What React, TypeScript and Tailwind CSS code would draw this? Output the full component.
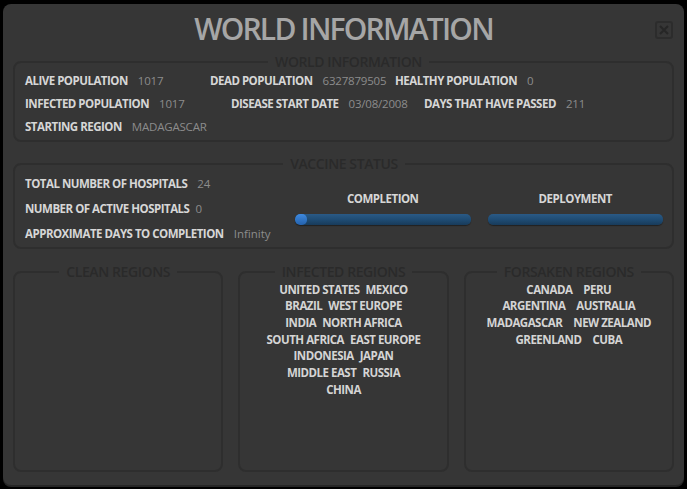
import React from "react";

const F = { fontFamily: '"Open Sans", "Noto Sans", sans-serif' };

function Legend({ children }: { children: React.ReactNode }) {
  return (
    <legend className="mx-auto px-[7px] text-[14px] leading-[16px] text-[#2a2a2a] font-semibold tracking-[-0.4px]">
      {children}
    </legend>
  );
}

function Pair({ label, value, w }: { label: string; value: string; w?: string }) {
  return (
    <div className={`flex items-center shrink-0 ${w ?? ""}`}>
      <span className="font-bold text-[#d6d6d6] tracking-[-0.5px]">{label}</span>
      <span className="ml-[10px] text-[#8c8c8c] tracking-[-0.2px]">{value}</span>
    </div>
  );
}

function Bar({ fill }: { fill: number }) {
  return (
    <div className="h-[11px] w-full rounded-[5px] bg-gradient-to-b from-[#2a5a86] via-[#1f4c74] to-[#183b5a] overflow-hidden shadow-[0_1px_1px_rgba(0,0,0,0.4)]">
      <div
        className="h-full rounded-[5px] bg-gradient-to-b from-[#3f8ae0] to-[#2462ad]"
        style={{ width: fill }}
      />
    </div>
  );
}

function RegionBox({
  title,
  lines,
  gap,
}: {
  title: string;
  lines: string[][];
  gap: string;
}) {
  return (
    <fieldset className="flex-1 h-[208px] border-2 border-[#2e2e2e] rounded-[8px] px-2 min-w-0">
      <Legend>{title}</Legend>
      <div className="flex flex-col items-center mt-[1px]">
        {lines.map((l, i) => (
          <div key={i} className={`flex ${gap} h-[16.7px] items-center text-[11.5px] font-bold text-[#d4d4d4] tracking-[-0.5px] whitespace-nowrap`}>
            {l.map((w) => (
              <span key={w}>{w}</span>
            ))}
          </div>
        ))}
      </div>
    </fieldset>
  );
}

export default function App() {
  return (
    <div className="w-[687px] h-[489px] bg-black pt-[4px] pl-[3px]" style={F}>
      <div className="w-[681px] h-[481px] bg-[#363636] rounded-[8px] shadow-[0_2px_0_#262626] flex flex-col px-[10px]">
        <div className="relative h-[46px] flex items-center justify-center">
          <h1 className="text-[30px] leading-[34px] mt-[3px] font-semibold text-[#a6a6a6] tracking-[-1.8px]">WORLD INFORMATION</h1>
          <div className="absolute right-[1px] top-[17px] w-[18px] h-[18px] border-2 border-[#2c2c2c] rounded-[3px] flex items-center justify-center">
            <svg width="12" height="12" viewBox="0 0 12 12">
              <path d="M2 2 L10 10 M10 2 L2 10" stroke="#262626" strokeWidth="2" />
            </svg>
          </div>
        </div>

        <fieldset className="h-[88px] border-2 border-[#2e2e2e] rounded-[8px] pl-[10px] text-[11.5px] mt-[4px]">
          <Legend>WORLD INFORMATION</Legend>
          <div className="flex flex-col mt-[-1px]">
            <div className="flex h-[23px] items-center">
              <Pair label="ALIVE POPULATION" value="1017" w="w-[185px]" />
              <Pair label="DEAD POPULATION" value="6327879505" w="w-[185px]" />
              <Pair label="HEALTHY POPULATION" value="0" />
            </div>
            <div className="flex h-[23px] items-center">
              <Pair label="INFECTED POPULATION" value="1017" w="w-[206px]" />
              <Pair label="DISEASE START DATE" value="03/08/2008" w="w-[193px]" />
              <Pair label="DAYS THAT HAVE PASSED" value="211" />
            </div>
            <div className="flex h-[23px] items-center">
              <Pair label="STARTING REGION" value="MADAGASCAR" />
            </div>
          </div>
        </fieldset>

        <fieldset className="h-[93px] border-2 border-[#2e2e2e] rounded-[8px] pl-[10px] pr-[9px] text-[11.5px] mt-[14px] flex">
          <Legend>VACCINE STATUS</Legend>
          <div className="flex w-full">
            <div className="flex flex-col w-[270px] mt-[-1px]">
              <div className="flex h-[25px] items-center">
                <span className="font-bold text-[#d6d6d6] tracking-[-0.5px]">TOTAL NUMBER OF HOSPITALS</span>
                <span className="ml-[10px] text-[#8c8c8c]">24</span>
              </div>
              <div className="flex h-[25px] items-center">
                <span className="font-bold text-[#d6d6d6] tracking-[-0.5px]">NUMBER OF ACTIVE HOSPITALS</span>
                <span className="ml-[6px] text-[#8c8c8c]">0</span>
              </div>
              <div className="flex h-[26px] items-center">
                <span className="font-bold text-[#d6d6d6] tracking-[-0.5px]">APPROXIMATE DAYS TO COMPLETION</span>
                <span className="ml-[10px] text-[#8c8c8c]">Infinity</span>
              </div>
            </div>
            <div className="flex-1 flex gap-[17px] pl-[0px] mt-[19px]">
              <div className="flex-1 flex flex-col items-center">
                <span className="font-bold text-[#d6d6d6] tracking-[-0.5px] h-[16px] leading-[16px]">COMPLETION</span>
                <div className="w-full mt-[7px]"><Bar fill={12} /></div>
              </div>
              <div className="flex-1 flex flex-col items-center">
                <span className="font-bold text-[#d6d6d6] tracking-[-0.5px] h-[16px] leading-[16px]">DEPLOYMENT</span>
                <div className="w-full mt-[7px]"><Bar fill={0} /></div>
              </div>
            </div>
          </div>
        </fieldset>

        <div className="flex gap-[15px] mt-[15px]">
          <RegionBox title="CLEAN REGIONS" lines={[]} gap="gap-[6px]" />
          <RegionBox
            title="INFECTED REGIONS"
            gap="gap-[6px]"
            lines={[
              ["UNITED STATES", "MEXICO"],
              ["BRAZIL", "WEST EUROPE"],
              ["INDIA", "NORTH AFRICA"],
              ["SOUTH AFRICA", "EAST EUROPE"],
              ["INDONESIA", "JAPAN"],
              ["MIDDLE EAST", "RUSSIA"],
              ["CHINA"],
            ]}
          />
          <RegionBox
            title="FORSAKEN REGIONS"
            gap="gap-[11px]"
            lines={[
              ["CANADA", "PERU"],
              ["ARGENTINA", "AUSTRALIA"],
              ["MADAGASCAR", "NEW ZEALAND"],
              ["GREENLAND", "CUBA"],
            ]}
          />
        </div>
      </div>
    </div>
  );
}
